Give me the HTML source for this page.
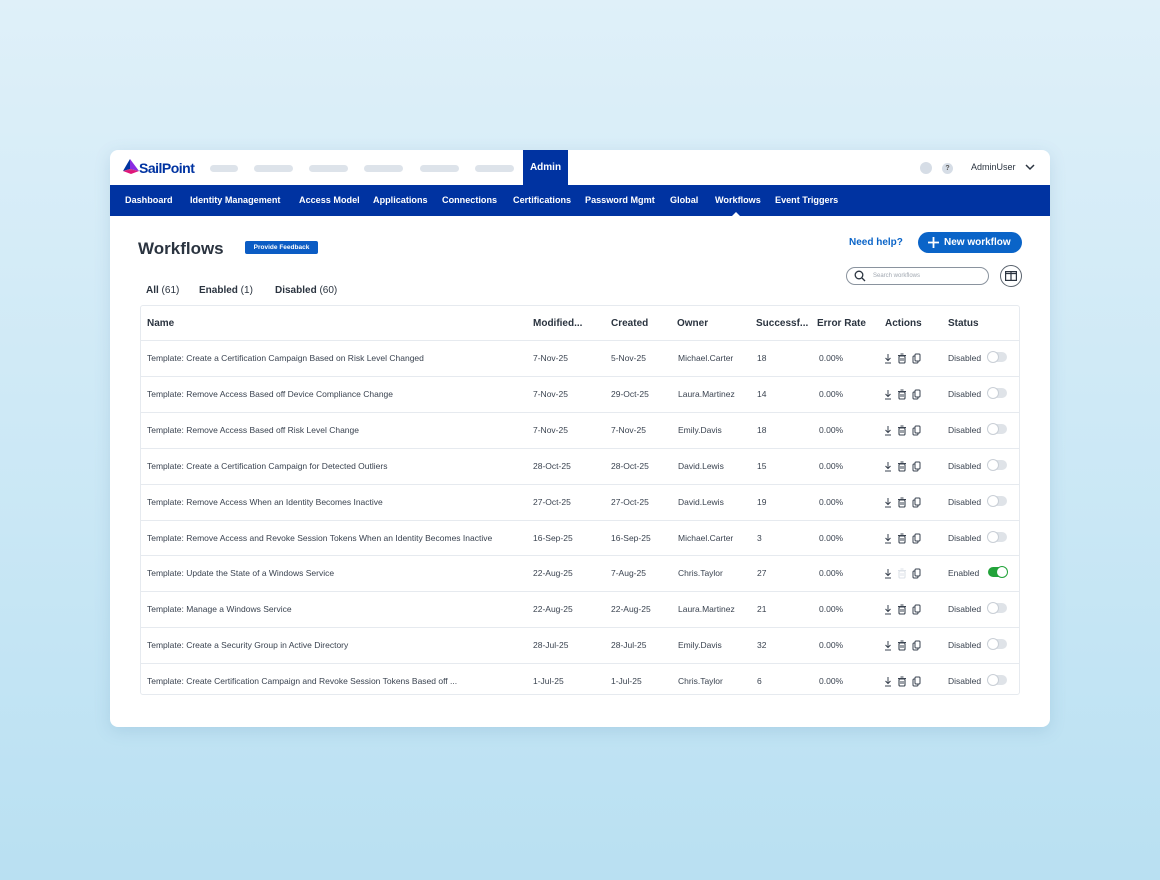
<!DOCTYPE html>
<html><head><meta charset="utf-8"><style>
*{box-sizing:border-box;margin:0;padding:0}
body{width:1160px;height:880px;background:linear-gradient(180deg,#dff0f9 0%,#c9e7f5 60%,#b9e0f2 100%);font-family:"Liberation Sans",sans-serif;position:relative;overflow:hidden;color:#2b3440}
.card{position:absolute;left:110px;top:150px;width:940px;height:577px;background:#fff;border-radius:8px;box-shadow:0 4px 16px rgba(80,130,170,.18);overflow:hidden}
.top{height:35px;position:relative}
.pill{position:absolute;top:15px;height:7px;border-radius:4px;background:#dde3ea}
.admin{position:absolute;left:413px;top:0;width:45px;height:35px;background:#0033a1;color:#fff;font-size:10px;font-weight:bold;text-align:center;line-height:36px}
.nav{height:31px;background:#0033a1;position:relative;color:#fff;font-size:9.1px;font-weight:bold}
.nav span{position:absolute;top:10px}
.abs{position:absolute}
.th{position:absolute;font-size:10px;font-weight:bold;color:#2b3440}
.row{position:absolute;left:30px;width:880px;height:36px;border-top:1px solid #e6eaef;font-size:8.5px;color:#3a4350}
.row span{position:absolute;top:12px}
.tog{position:absolute;top:11px;left:848px;width:19px;height:10px;border-radius:5px;background:#dfe3e8}
.tog:after{content:"";position:absolute;left:0;top:0;width:10px;height:10px;border-radius:50%;background:#fff;box-shadow:0 0 0 1px #c9cfd6}
.tog.on{background:#22a33a}
.tog.on:after{left:9px;box-shadow:0 0 0 1px #22a33a}
</style></head><body>
<div class="card">
 <div class="top">
  <svg class="abs" style="left:13px;top:9px" width="16" height="15" viewBox="0 0 16 15"><polygon points="7,0 0,12 7,10" fill="#0033a1"/><polygon points="7,0 16,12 7,10" fill="#8a2be2"/><polygon points="0,12 16,12 7,10" fill="#d6247a"/><polygon points="0,12 16,12 8,15" fill="#e0157a"/></svg>
  <div class="abs" style="left:29px;top:10px;font-size:14px;font-weight:bold;color:#0033a1;letter-spacing:-.5px">SailPoint</div>
  <div class="pill" style="left:100px;width:28px"></div>
  <div class="pill" style="left:144px;width:39px"></div>
  <div class="pill" style="left:199px;width:39px"></div>
  <div class="pill" style="left:254px;width:39px"></div>
  <div class="pill" style="left:310px;width:39px"></div>
  <div class="pill" style="left:365px;width:39px"></div>
  <div class="admin">Admin</div>
  <div class="abs" style="left:810px;top:12px;width:12px;height:12px;border-radius:50%;background:#d6dde6"></div>
  <div class="abs" style="left:832px;top:13px;width:11px;height:11px;border-radius:50%;background:#d6dde6;font-size:7px;text-align:center;line-height:11px;font-weight:bold;color:#555">?</div>
  <div class="abs" style="left:861px;top:12px;font-size:9px;color:#2b3440">AdminUser</div>
  <svg class="abs" style="left:915px;top:14px" width="10" height="7"><path d="M1 1l4 4 4-4" stroke="#2b3440" stroke-width="1.5" fill="none"/></svg>
 </div>
 <div class="nav">
  <span style="left:15px">Dashboard</span><span style="left:80px">Identity Management</span><span style="left:189px">Access Model</span><span style="left:263px">Applications</span><span style="left:332px">Connections</span><span style="left:403px">Certifications</span><span style="left:475px">Password Mgmt</span><span style="left:560px">Global</span><span style="left:605px">Workflows</span><span style="left:665px">Event Triggers</span>
  <div class="abs" style="left:622px;top:27px;width:0;height:0;border-left:4px solid transparent;border-right:4px solid transparent;border-bottom:4px solid #fff"></div>
 </div>
 <div class="abs" style="left:28px;top:89px;font-size:17px;font-weight:bold;color:#2b3440">Workflows</div>
 <div class="abs" style="left:135px;top:91px;width:73px;height:13px;background:#0b5cc4;border-radius:2px;color:#fff;font-size:6.5px;font-weight:bold;text-align:center;line-height:13px">Provide Feedback</div>
 <div class="abs" style="left:739px;top:87px;font-size:10px;font-weight:bold;color:#0a64c8">Need help?</div>
 <div class="abs" style="left:808px;top:82px;width:104px;height:21px;border-radius:11px;background:#0a64c8;color:#fff;font-size:10px;font-weight:bold;line-height:21px;padding-left:26px">New workflow</div>
 <svg class="abs" style="left:818px;top:87px" width="11" height="11"><path d="M5.5 0v11M0 5.5h11" stroke="#fff" stroke-width="1.8"/></svg>
 <div class="abs" style="left:736px;top:117px;width:143px;height:18px;border:1px solid #8a939e;border-radius:9px;font-size:6px;color:#a0a7b0;line-height:16px;padding-left:26px">Search workflows</div>
 <svg class="abs" style="left:744px;top:120px" width="12" height="12"><circle cx="5" cy="5" r="3.8" stroke="#2b3440" stroke-width="1.3" fill="none"/><path d="M8 8l3 3" stroke="#2b3440" stroke-width="1.3"/></svg>
 <div class="abs" style="left:890px;top:115px;width:22px;height:22px;border:1px solid #5a636e;border-radius:50%"></div>
 <svg class="abs" style="left:895px;top:121px" width="12" height="10"><rect x=".6" y=".6" width="10.8" height="8.8" fill="none" stroke="#2b3440" stroke-width="1.2"/><path d="M6 1v8M1 2.5h10" stroke="#2b3440" stroke-width="1.2"/></svg>
 <div class="abs" style="left:36px;top:135px;font-size:10px;color:#2b3440"><b>All</b> (61)</div>
 <div class="abs" style="left:89px;top:135px;font-size:10px;color:#2b3440"><b>Enabled</b> (1)</div>
 <div class="abs" style="left:165px;top:135px;font-size:10px;color:#2b3440"><b>Disabled</b> (60)</div>
 <div class="abs" style="left:30px;top:155px;width:880px;height:390px;border:1px solid #e6eaef;border-radius:3px"></div>
 <div class="th" style="left:37px;top:168px">Name</div>
 <div class="th" style="left:423px;top:168px">Modified...</div>
 <div class="th" style="left:501px;top:168px">Created</div>
 <div class="th" style="left:567px;top:168px">Owner</div>
 <div class="th" style="left:646px;top:168px">Successf...</div>
 <div class="th" style="left:707px;top:168px">Error Rate</div>
 <div class="th" style="left:775px;top:168px">Actions</div>
 <div class="th" style="left:838px;top:168px">Status</div>
 <div id="rows"></div>
</div>
<script>
var d=[["Template: Create a Certification Campaign Based on Risk Level Changed","7-Nov-25","5-Nov-25","Michael.Carter","18"],
["Template: Remove Access Based off Device Compliance Change","7-Nov-25","29-Oct-25","Laura.Martinez","14"],
["Template: Remove Access Based off Risk Level Change","7-Nov-25","7-Nov-25","Emily.Davis","18"],
["Template: Create a Certification Campaign for Detected Outliers","28-Oct-25","28-Oct-25","David.Lewis","15"],
["Template: Remove Access When an Identity Becomes Inactive","27-Oct-25","27-Oct-25","David.Lewis","19"],
["Template: Remove Access and Revoke Session Tokens When an Identity Becomes Inactive","16-Sep-25","16-Sep-25","Michael.Carter","3"],
["Template: Update the State of a Windows Service","22-Aug-25","7-Aug-25","Chris.Taylor","27"],
["Template: Manage a Windows Service","22-Aug-25","22-Aug-25","Laura.Martinez","21"],
["Template: Create a Security Group in Active Directory","28-Jul-25","28-Jul-25","Emily.Davis","32"],
["Template: Create Certification Campaign and Revoke Session Tokens Based off ...","1-Jul-25","1-Jul-25","Chris.Taylor","6"]];
var h="";
d.forEach(function(r,i){var on=i==6;var tc=on?"#dde2e8":"#3a4350";
h+='<div class="row" style="top:'+(190+i*35.9)+'px"><span style="left:7px">'+r[0]+'</span><span style="left:393px">'+r[1]+'</span><span style="left:471px">'+r[2]+'</span><span style="left:538px">'+r[3]+'</span><span style="left:617px">'+r[4]+'</span><span style="left:679px">0.00%</span>'+
'<svg style="position:absolute;left:744px;top:12px" width="40" height="11"><path d="M4 1v6M1.5 5l2.5 2.5L6.5 5M1 10h6" stroke="#3a4350" stroke-width="1" fill="none"/><rect x="15" y="3" width="6" height="7" rx="1" fill="none" stroke="'+tc+'" stroke-width="1.1"/><path d="M14 2.5h8M16.5 1h3M17 5v3M19 5v3" stroke="'+tc+'" stroke-width="1"/><rect x="29" y="3" width="5" height="7" rx="1" fill="#fff" stroke="#3a4350" stroke-width="1"/><rect x="31" y="1" width="5" height="7" rx="1" fill="#fff" stroke="#3a4350" stroke-width="1"/></svg>'+
'<span style="left:808px">'+(on?"Enabled":"Disabled")+'</span><div class="tog'+(on?" on":"")+'"></div></div>';});
document.getElementById("rows").innerHTML=h;
</script>
</body></html>
